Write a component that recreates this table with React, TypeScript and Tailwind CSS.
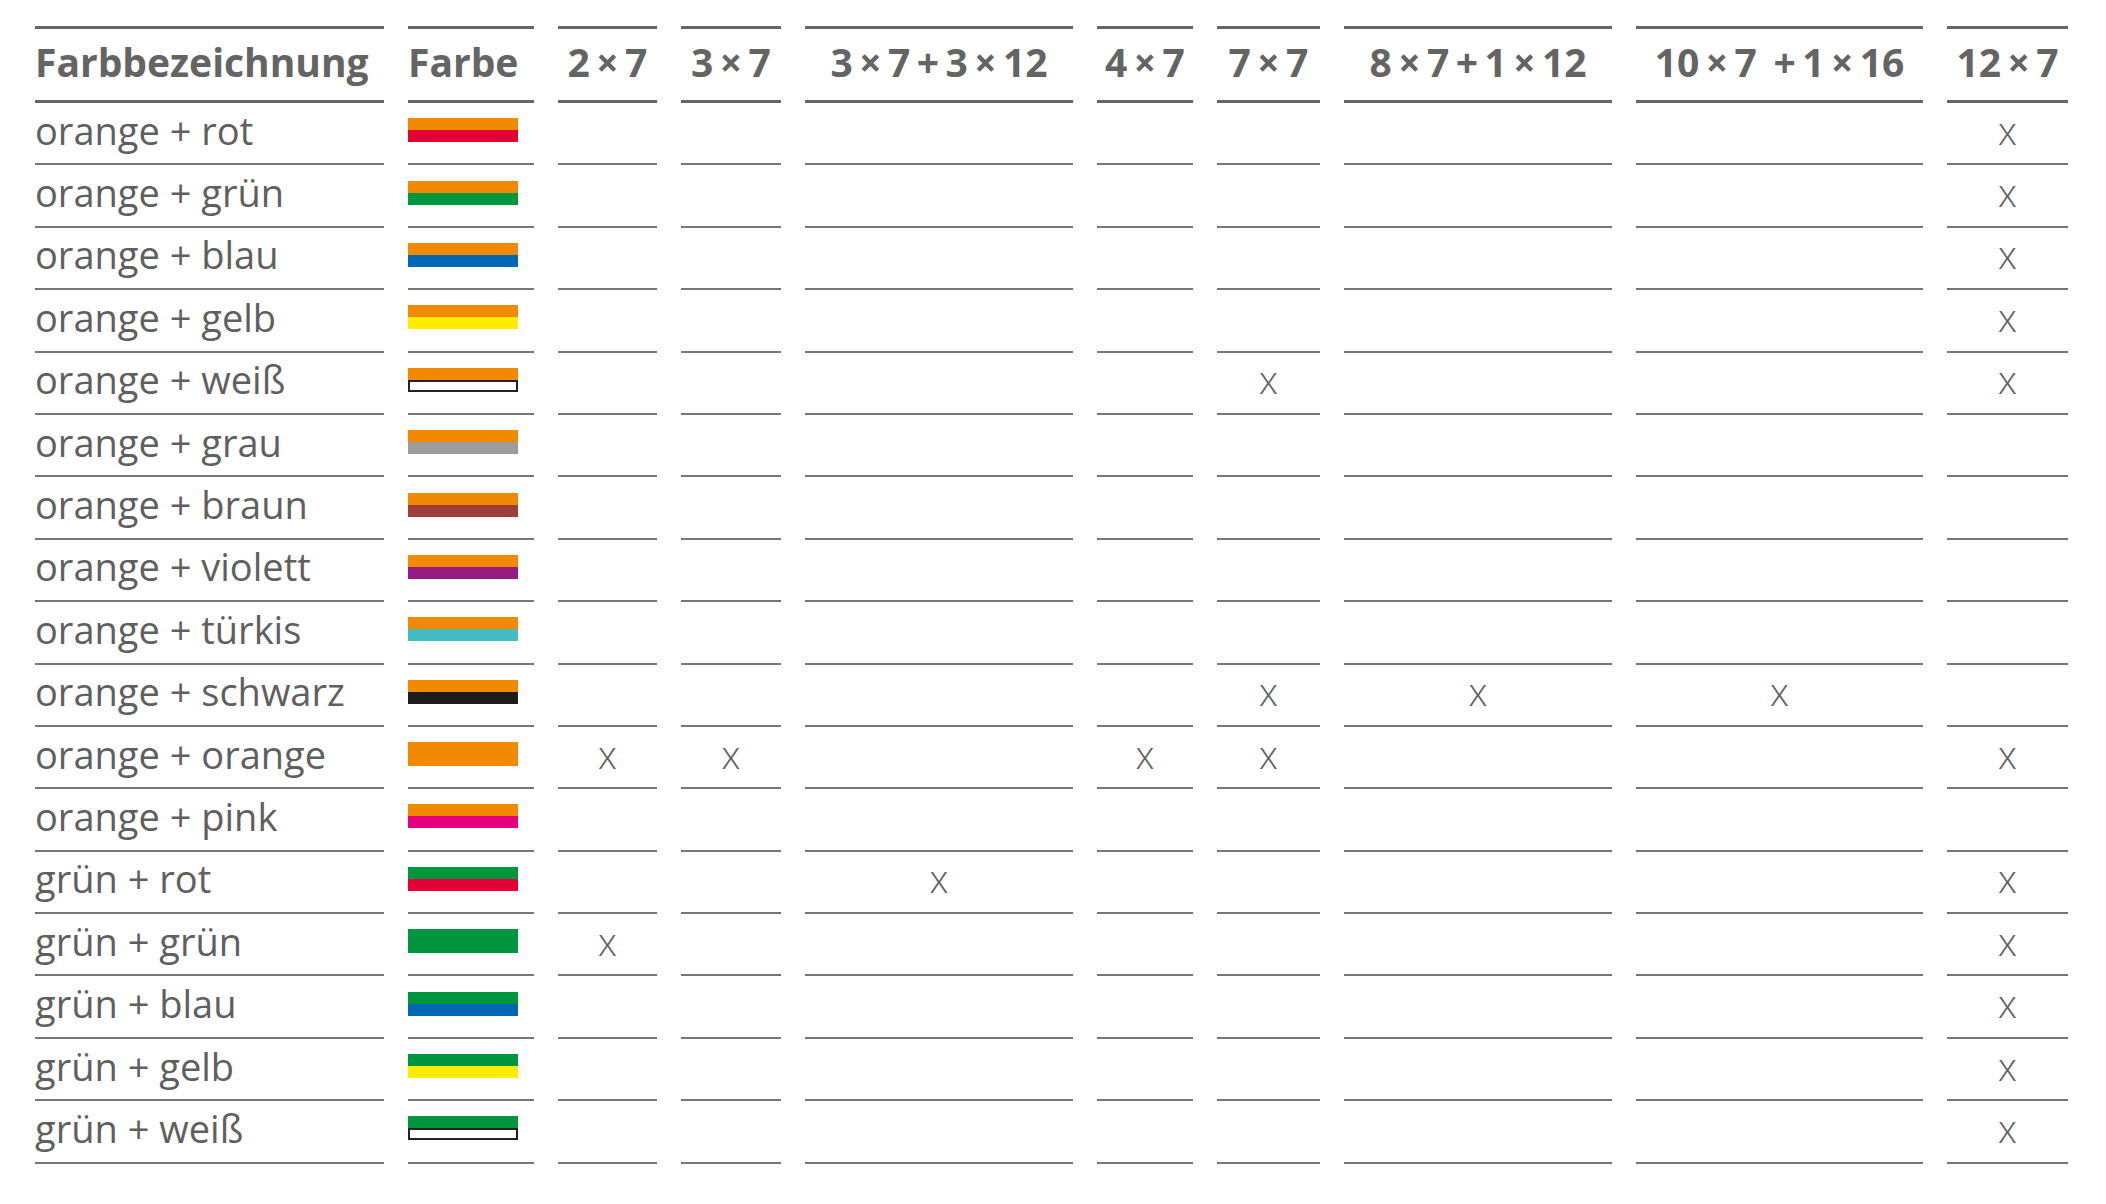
const ORANGE = "#f18a00";

const colors: Record<string, string> = {
  rot: "#e30034",
  grün: "#009640",
  blau: "#0068b4",
  gelb: "#ffed00",
  weiß: "#ffffff",
  grau: "#9d9d9c",
  braun: "#9d3e3b",
  violett: "#951b81",
  türkis: "#44bcc4",
  schwarz: "#1d1d1b",
  orange: ORANGE,
  pink: "#e5007d",
};

// thin spaces around the operators, like in the print layout
const headers = [
  "2\u2009×\u20097",
  "3\u2009×\u20097",
  "3\u2009×\u20097\u2009+\u20093\u2009×\u200912",
  "4\u2009×\u20097",
  "7\u2009×\u20097",
  "8\u2009×\u20097\u2009+\u20091\u2009×\u200912",
  "10\u2009×\u20097 \u2009+\u20091\u2009×\u200916",
  "12\u2009×\u20097",
];

// marks: index into headers
const rows: { top: string; bottom: string; marks: number[] }[] = [
  { top: "orange", bottom: "rot", marks: [7] },
  { top: "orange", bottom: "grün", marks: [7] },
  { top: "orange", bottom: "blau", marks: [7] },
  { top: "orange", bottom: "gelb", marks: [7] },
  { top: "orange", bottom: "weiß", marks: [4, 7] },
  { top: "orange", bottom: "grau", marks: [] },
  { top: "orange", bottom: "braun", marks: [] },
  { top: "orange", bottom: "violett", marks: [] },
  { top: "orange", bottom: "türkis", marks: [] },
  { top: "orange", bottom: "schwarz", marks: [4, 5, 6] },
  { top: "orange", bottom: "orange", marks: [0, 1, 3, 4, 7] },
  { top: "orange", bottom: "pink", marks: [] },
  { top: "grün", bottom: "rot", marks: [2, 7] },
  { top: "grün", bottom: "grün", marks: [0, 7] },
  { top: "grün", bottom: "blau", marks: [7] },
  { top: "grün", bottom: "gelb", marks: [7] },
  { top: "grün", bottom: "weiß", marks: [7] },
];

const ColorBar = ({ top, bottom }: { top: string; bottom: string }) => (
  <div className="flex flex-col w-[110px]">
    <div className="h-[12px]" style={{ backgroundColor: colors[top] }} />
    {bottom === "weiß" ? (
      <div className="h-[12px] bg-white border-2 border-[#222]" />
    ) : (
      <div className="h-[12px]" style={{ backgroundColor: colors[bottom] }} />
    )}
  </div>
);

const App = () => {
  return (
    <div
      className="min-h-screen bg-white pl-[35px] pt-[26px] text-[#646464]"
      style={{ fontFamily: '"Open Sans", "Noto Sans", sans-serif' }}
    >
      <div className="grid grid-cols-[349px_126px_99px_100px_268px_96px_103px_268px_287px_121px] gap-x-[24px]">
        <div className="h-[77px] border-y-[3px] border-[#666] flex items-center pb-[5px] text-[39px] font-bold">
          Farbbezeichnung
        </div>
        <div className="h-[77px] border-y-[3px] border-[#666] flex items-center pb-[5px] text-[39px] font-bold">
          Farbe
        </div>
        {headers.map((h) => (
          <div
            key={h}
            className="h-[77px] border-y-[3px] border-[#666] flex items-center justify-center pb-[5px] text-[39px] font-bold whitespace-pre"
          >
            {h}
          </div>
        ))}

        {rows.map((r, i) => (
          <div key={i} className="contents">
            <div className="h-[62.4px] border-b-2 border-[#777] flex items-center pb-[6px] text-[38px] font-normal whitespace-nowrap text-[#5f5f5f]">
              {r.top} + {r.bottom}
            </div>
            <div className="h-[62.4px] border-b-2 border-[#777] flex items-center pb-[6px]">
              <ColorBar top={r.top} bottom={r.bottom} />
            </div>
            {headers.map((h, j) => (
              <div
                key={h}
                className="h-[62.4px] border-b-2 border-[#777] flex items-center justify-center pb-[6px] text-[38px] font-light text-[#5f5f5f]"
              >
                {r.marks.includes(j) ? "x" : ""}
              </div>
            ))}
          </div>
        ))}
      </div>
    </div>
  );
};

export default App;
